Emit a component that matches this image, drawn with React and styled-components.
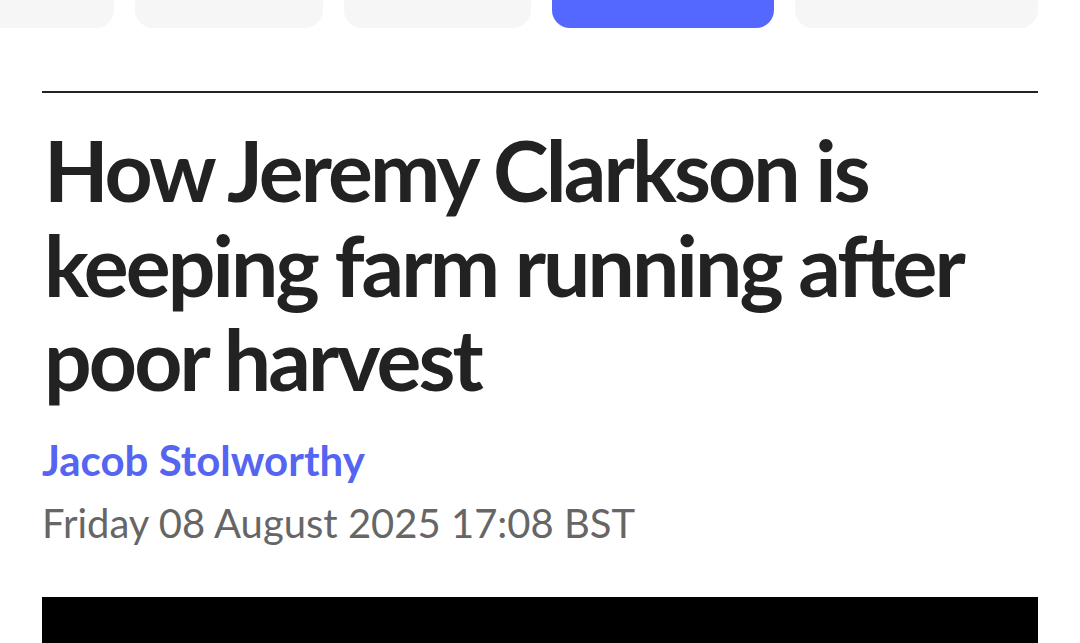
import React from "react";
import styled, { createGlobalStyle } from "styled-components";

const GlobalStyle = createGlobalStyle`
  html, body {
    margin: 0;
    padding: 0;
    background: #ffffff;
  }
  body {
    font-family: Lato, "Noto Sans", sans-serif;
    overflow: hidden;
  }
`;

const tabs = [
  { width: 170, active: false },
  { width: 188, active: false },
  { width: 187, active: false },
  { width: 222, active: true },
  { width: 243, active: false },
];

const Page = styled.div`
  width: 1080px;
  height: 643px;
  overflow: hidden;
`;

const TabStrip = styled.nav`
  display: flex;
  gap: 21px;
  margin-left: -56px;
  height: 28px;
`;

const Tab = styled.div`
  flex: 0 0 auto;
  height: 28px;
  border-radius: 0 0 18px 18px;
  background: ${(p) => (p.$active ? "#5468ff" : "#f6f6f6")};
`;

const Article = styled.article`
  padding: 63px 42px 0 42px;
`;

const Rule = styled.hr`
  margin: 0;
  border: 0;
  height: 2px;
  background: #222222;
`;

const Headline = styled.h1`
  margin: 30px 0 0 2px;
  font-family: Lato, "Noto Sans", sans-serif;
  font-weight: 700;
  font-size: 84px;
  line-height: 94.5px;
  letter-spacing: -2.9px;
  color: #222222;
`;

const Byline = styled.a`
  display: block;
  margin-top: 30px;
  font-weight: 700;
  font-size: 42px;
  line-height: 46px;
  letter-spacing: 0;
  color: #5565f2;
  text-decoration: none;
`;

const Dateline = styled.time`
  display: block;
  margin-top: 16px;
  font-weight: 400;
  font-size: 40px;
  line-height: 48px;
  color: #666666;
`;

const Media = styled.div`
  margin-top: 50px;
  height: 120px;
  background: #000000;
`;

export default function App() {
  return (
    <Page>
      <GlobalStyle />
      <TabStrip>
        {tabs.map((t, i) => (
          <Tab key={i} $active={t.active} style={{ width: t.width }} />
        ))}
      </TabStrip>
      <Article>
        <Rule />
        <Headline>How Jeremy Clarkson is keeping farm running after poor harvest</Headline>
        <Byline href="#">Jacob Stolworthy</Byline>
        <Dateline>Friday 08 August 2025 17:08 BST</Dateline>
        <Media />
      </Article>
    </Page>
  );
}
